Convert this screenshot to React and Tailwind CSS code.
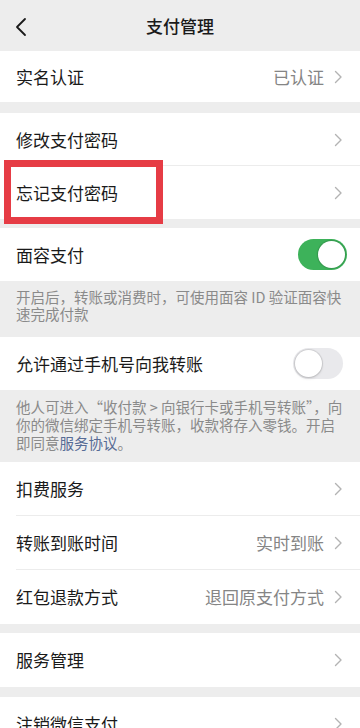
import React from "react";

const FONT = { fontFamily: '"Noto Sans CJK SC", "Noto Sans", sans-serif' };

function Chevron() {
  return (
    <svg width="9" height="14" viewBox="0 0 9 14" className="shrink-0">
      <polyline points="1.5,1.5 7,7 1.5,12.5" fill="none" stroke="#b3b3b3" strokeWidth="1.4" strokeLinecap="round" strokeLinejoin="round" />
    </svg>
  );
}

function Row({ label, value, h = "h-[53px]", divider = false, children, extra }) {
  return (
    <div className={`relative bg-white ${h}`}>
      {extra}
      <div className="flex h-full items-center pl-4 pr-[17px]">
        <span className="flex-1 text-[17px] text-[#1a1a1a]">{label}</span>
        {value && <span className="mr-[10px] text-[17px] text-[#858585]">{value}</span>}
        {children || <Chevron />}
      </div>
      {divider && <div className="absolute bottom-0 left-4 right-0 h-px bg-[#ececec]" />}
    </div>
  );
}

function ToggleOn() {
  return (
    <div className="mr-[-4px] flex h-[31px] w-[49px] items-center justify-end rounded-full bg-[#3db25a] p-[2px]">
      <div className="h-[27px] w-[27px] rounded-full bg-white shadow-[0_0_1px_1px_rgba(0,0,0,0.15)]" />
    </div>
  );
}

function ToggleOff() {
  return (
    <div className="flex h-[31px] w-[50px] items-center justify-start rounded-full bg-[#e9e9ec] p-[2px]">
      <div className="h-[27px] w-[27px] rounded-full bg-white shadow-[0_0_1px_1px_rgba(0,0,0,0.12),0_2px_3px_rgba(0,0,0,0.08)]" />
    </div>
  );
}

export default function App() {
  return (
    <div style={FONT} className="min-h-[728px] w-[360px] overflow-hidden bg-[#ededed]">
      {/* header */}
      <div className="relative flex h-[51px] items-center justify-center bg-[#ededed]">
        <svg width="12" height="20" viewBox="0 0 12 20" className="absolute left-[15px] top-[17px]">
          <polyline points="10,2 2,10 10,18" fill="none" stroke="#1a1a1a" strokeWidth="1.8" strokeLinecap="round" strokeLinejoin="round" />
        </svg>
        <span className="text-[17px] font-medium text-[#1a1a1a]">支付管理</span>
      </div>

      <Row label="实名认证" value="已认证" h="h-[51px]" />
      <div className="h-[11px]" />

      <Row label="修改支付密码" divider />
      <Row
        label="忘记支付密码"
        extra={
          <div className="pointer-events-none absolute left-[4px] top-[-6px] z-10 h-[64px] w-[159px] border-[7px] border-[#e63c45]" />
        }
      />
      <div className="h-[9px]" />

      <Row label="面容支付">
        <ToggleOn />
      </Row>
      <div className="px-4 pb-[15px] pt-[7px] text-[14.5px] leading-[17px] text-[#8a8a8a]">
        开启后，转账或消费时，可使用面容 ID 验证面容快<br />速完成付款
      </div>

      <Row label="允许通过手机号向我转账">
        <ToggleOff />
      </Row>
      <div className="px-4 pb-[10px] pt-[8px] text-[14.5px] leading-[18px] text-[#8a8a8a]">
        他人可进入“收付款 &gt; 向银行卡或手机号转账”，向<br />
        你的微信绑定手机号转账，收款将存入零钱。开启<br />
        即同意<span className="text-[#576b95]">服务协议</span>。
      </div>

      <Row label="扣费服务" h="h-[54px]" divider />
      <Row label="转账到账时间" value="实时到账" h="h-[54px]" divider />
      <Row label="红包退款方式" value="退回原支付方式" h="h-[54px]" />
      <div className="h-[9px]" />

      <Row label="服务管理" h="h-[54px]" />
      <div className="h-[10px]" />

      <Row label="注销微信支付" h="h-[54px]" />
    </div>
  );
}
